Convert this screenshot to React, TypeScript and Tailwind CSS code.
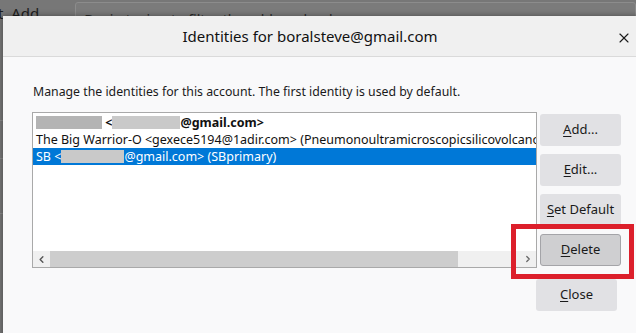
import { ChevronLeft, ChevronRight, X } from 'lucide-react'

function Blur({ w, dark }: { w: number; dark?: boolean }) {
    return (
        <span
            className={`inline-block h-[13px] align-[-2px] ${dark ? 'bg-[#b4b4b4]' : 'bg-[#c9c9c9]'}`}
            style={{ width: w }}
        />
    )
}

function DialogButton({ keyChar, rest, active }: { keyChar: string; rest: string; active?: boolean }) {
    return (
        <button
            className={`h-[32px] w-[81px] rounded-[3px] text-[13px] text-[#1a1a1a] ${
                active ? 'bg-[#cfcfd1] border border-[#a4a4a8]' : 'bg-[#e1e1e4]'
            }`}
        >
            <span className="underline underline-offset-2">{keyChar}</span>
            {rest}
        </button>
    )
}

export default function App() {
    return (
        <div className="relative w-[636px] h-[333px] overflow-hidden bg-[#777777] font-['Noto_Sans','Open_Sans',sans-serif]">
            {/* window behind the dialog */}
            <div className="flex items-start h-[16px]">
                <span className="mt-[6px] ml-[-2px] text-[15px] leading-none text-[#1e1e1e]">t&nbsp; Add</span>
                <div className="ml-[36px] mt-[2px] h-[30px] flex-1 rounded-[3px] border border-[#8c8c8c] bg-[#7b7b7b] pl-[8px] pt-[10px] text-[14px] leading-none text-[#2a2a2a]">
                    Begin typing to filter the address book
                </div>
            </div>
            <div className="absolute left-0 top-[120px] w-[3px] h-px bg-[#8a8a8a]" />
            <div className="absolute left-0 top-[158px] w-[3px] h-px bg-[#8a8a8a]" />
            <div className="absolute left-0 top-[213px] w-[3px] h-px bg-[#8a8a8a]" />

            {/* dialog */}
            <div className="absolute left-[3px] top-[16px] w-[650px] h-[330px] bg-[#f9f9fa] shadow-[0_0_6px_rgba(0,0,0,0.4)]">
                <div className="relative flex items-center h-[41px] bg-[#f0f0f0] border-b border-[#dadada]">
                    <div className="w-[633px] text-center text-[15px] text-[#111] pr-[19px]">Identities for boralsteve@gmail.com</div>
                    <X className="absolute left-[613px] top-[14px] w-[16px] h-[16px] text-[#1a1a1a]" strokeWidth={1.7} />
                </div>

                <div className="pl-[29px] pt-[27px]">
                    <p className="text-[12.3px] leading-[16px] text-[#1a1a1a] pl-[1px]">
                        Manage the identities for this account. The first identity is used by default.
                    </p>

                    <div className="flex mt-[12px]">
                        <div className="flex flex-col w-[505px] h-[156px] border border-[#a9a9a9] bg-white">
                            <div className="flex-1 pt-[1px] text-[12.5px] leading-[17px] text-[#111] overflow-hidden whitespace-nowrap">
                                <div className="pl-[3px] font-bold">
                                    <Blur w={66} dark /> &lt;<Blur w={68} />@gmail.com&gt;
                                </div>
                                <div className="pl-[3px]">
                                    The Big Warrior-O &lt;gexece5194@1adir.com&gt; (Pneumonoultramicroscopicsilicovolcanoconiosis)
                                </div>
                                <div className="pl-[3px] bg-[#0078d7] text-white">
                                    SB &lt;<Blur w={63} />@gmail.com&gt; (SBprimary)
                                </div>
                            </div>
                            <div className="flex h-[16px] bg-[#f0f0f0]">
                                <div className="flex items-center justify-center w-[17px]">
                                    <ChevronLeft className="w-[11px] h-[11px] text-[#555]" strokeWidth={3} />
                                </div>
                                <div className="w-[408px] bg-[#cdcdcd]" />
                                <div className="flex-1" />
                                <div className="flex items-center justify-center w-[17px]">
                                    <ChevronRight className="w-[10px] h-[10px] text-[#666]" strokeWidth={3} />
                                </div>
                            </div>
                        </div>

                        <div className="flex flex-col gap-[8px] ml-[3px] pt-[2px]">
                            <DialogButton keyChar="A" rest="dd..." />
                            <DialogButton keyChar="E" rest="dit..." />
                            <DialogButton keyChar="S" rest="et Default" />
                            <div className="relative">
                                <DialogButton keyChar="D" rest="elete" active />
                                <div className="absolute left-[-29px] top-[-10px] w-[123px] h-[55px] border-[5px] border-[#dc1f2b]" />
                            </div>
                            <div className="ml-[-4px] mt-[5px]">
                                <DialogButton keyChar="C" rest="lose" />
                            </div>
                        </div>
                    </div>
                </div>
            </div>
        </div>
    )
}
